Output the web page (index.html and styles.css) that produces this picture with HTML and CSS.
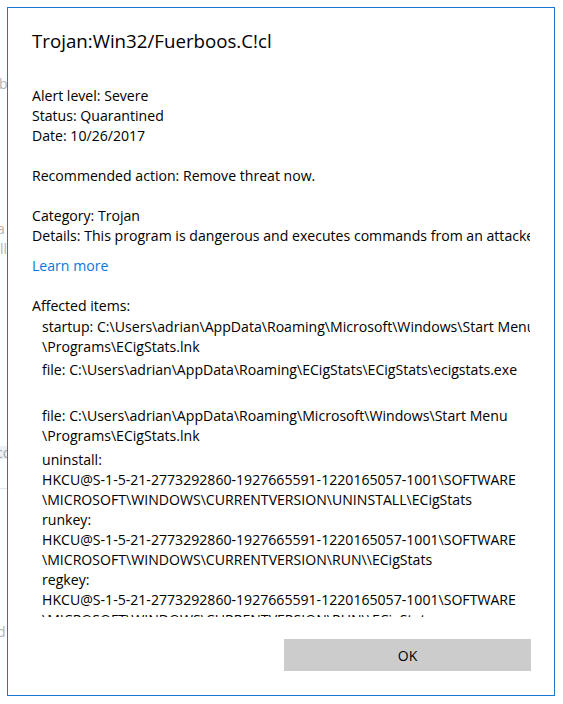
FILE: index.html
```html
<!DOCTYPE html>
<html>
<head>
<meta charset="utf-8">
<link rel="stylesheet" href="styles.css">
</head>
<body>
<div class="backdrop">
  <span class="frag frag-b">b</span>
  <span class="frag frag-a">a</span>
  <span class="frag frag-ll">ll</span>
  <div class="frag-band"><span>co</span></div>
  <div class="frag-line"></div>
  <span class="frag frag-d">d</span>
</div>
<div class="dialog">
  <h1 class="title">Trojan:Win32/Fuerboos.C!cl</h1>
  <div class="scroll">
    <div class="line">Alert level: Severe</div>
    <div class="line">Status: Quarantined</div>
    <div class="line">Date: 10/26/2017</div>
    <div class="line blank"></div>
    <div class="line">Recommended action: Remove threat now.</div>
    <div class="line blank"></div>
    <div class="line">Category: Trojan</div>
    <div class="line">Details: This program is dangerous and executes commands from an attacker.</div>
    <a class="line link" href="#">Learn more</a>
    <div class="line affected">Affected items:</div>
    <div class="items">
      <div class="item">
        <div class="line">startup: C:\Users\adrian\AppData\Roaming\Microsoft\Windows\Start Menu</div>
        <div class="line">\Programs\ECigStats.lnk</div>
      </div>
      <div class="item">
        <div class="line">file: C:\Users\adrian\AppData\Roaming\ECigStats\ECigStats\ecigstats.exe</div>
      </div>
      <div class="item">
        <div class="line blank"></div>
      </div>
      <div class="item">
        <div class="line">file: C:\Users\adrian\AppData\Roaming\Microsoft\Windows\Start Menu</div>
        <div class="line">\Programs\ECigStats.lnk</div>
      </div>
      <div class="item-group">
        <div class="item">
          <div class="line">uninstall:</div>
          <div class="line">HKCU@S-1-5-21-2773292860-1927665591-1220165057-1001\SOFTWARE</div>
          <div class="line">\MICROSOFT\WINDOWS\CURRENTVERSION\UNINSTALL\ECigStats</div>
        </div>
        <div class="item">
          <div class="line">runkey:</div>
          <div class="line">HKCU@S-1-5-21-2773292860-1927665591-1220165057-1001\SOFTWARE</div>
          <div class="line">\MICROSOFT\WINDOWS\CURRENTVERSION\RUN\\ECigStats</div>
        </div>
        <div class="item">
          <div class="line">regkey:</div>
          <div class="line">HKCU@S-1-5-21-2773292860-1927665591-1220165057-1001\SOFTWARE</div>
          <div class="line">\MICROSOFT\WINDOWS\CURRENTVERSION\RUN\\ECigStats</div>
        </div>
      </div>
    </div>
  </div>
  <div class="footer">
    <button class="ok" type="button">OK</button>
  </div>
</div>
</body>
</html>
```
FILE: styles.css
```css
html, body {
  margin: 0;
  padding: 0;
  background: #ffffff;
}

body {
  position: relative;
  width: 563px;
  height: 704px;
  overflow: hidden;
  padding: 7px;
  box-sizing: border-box;
  font-family: "Open Sans", "Noto Sans", sans-serif;
  color: #000000;
}

/* underlying window fragments visible at the left edge */
.backdrop {
  position: absolute;
  left: 0;
  top: 0;
  width: 7px;
  height: 704px;
  overflow: hidden;
  font-size: 14px;
  line-height: 14px;
  color: #b4b4b4;
}

.frag {
  position: absolute;
  left: -1px;
}

.frag-b { top: 77px; }
.frag-a { top: 222px; left: -3px; }
.frag-ll { top: 242px; left: 0px; }
.frag-d { top: 625px; left: -3px; }

.frag-band {
  position: absolute;
  left: 0;
  top: 446px;
  width: 7px;
  height: 13px;
  background: #f0f0f0;
  color: #a8a8a8;
  font-size: 14px;
  line-height: 13px;
  white-space: nowrap;
}

.frag-band span {
  margin-left: -4px;
}

.frag-line {
  position: absolute;
  left: 0;
  top: 488px;
  width: 7px;
  height: 1px;
  background: #e6e6e6;
}

/* dialog */
.dialog {
  position: relative;
  width: 548px;
  height: 689px;
  box-sizing: border-box;
  border: 1px solid #1a78d2;
  background: #ffffff;
  padding: 20px 23px 0 24px;
  display: flex;
  flex-direction: column;
}

.title {
  margin: 0 0 31.5px 0;
  font-size: 18.7px;
  line-height: 26px;
  font-weight: 400;
  white-space: nowrap;
}

.scroll {
  width: 498px;
  height: 531.5px;
  overflow: hidden;
  font-size: 14.1px;
  line-height: 20px;
}

.line {
  display: block;
  height: 20px;
  white-space: nowrap;
}

.link {
  color: #0a78d6;
  text-decoration: none;
  margin-top: 10px;
  width: max-content;
}

.affected {
  margin-top: 20px;
}

.items {
  margin-top: 1px;
  padding-left: 10px;
  display: flex;
  flex-direction: column;
  gap: 3px;
}

.item-group {
  margin-top: 1px;
  display: flex;
  flex-direction: column;
}

.footer {
  margin-top: 22px;
  display: flex;
  justify-content: flex-end;
}

.ok {
  width: 247px;
  height: 32px;
  margin: 0;
  border: none;
  background: #cccccc;
  font-family: "Open Sans", "Noto Sans", sans-serif;
  font-size: 14px;
  color: #000000;
  padding: 0;
}
```
